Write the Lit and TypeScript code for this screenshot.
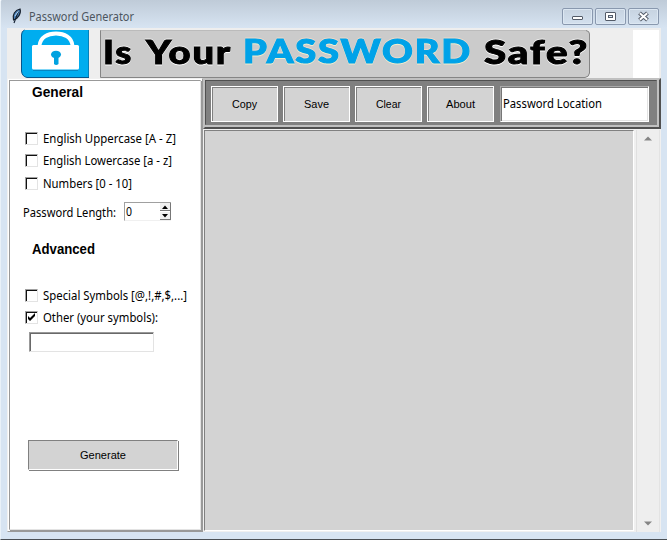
import { LitElement, html, css } from "lit";
import { customElement, property, state } from "lit/decorators.js";

@customElement("fit-label")
class FitLabel extends LitElement {
  @property() text = "";
  @property({ type: Number }) w = 60;
  static styles = css`
    :host { display: block; height: 16px; }
    svg { display: block; overflow: visible; }
    text { font-family: "Noto Sans", "Open Sans", sans-serif; font-size: 12px; fill: var(--ink, #000); }
    :host([arial]) text { font-family: "Liberation Sans", Arial, sans-serif; font-size: 11.4px; }
    :host([heading]) text { font-family: "Liberation Sans", Arial, sans-serif; font-size: 14px; font-weight: 700; }
  `;
  render() {
    return html`<svg width=${this.w} height="16"><text x="0" y="12" textLength=${this.w} lengthAdjust="spacingAndGlyphs">${this.text}</text></svg>`;
  }
}

@customElement("tk-check")
class TkCheck extends LitElement {
  @property() label = "";
  @property({ type: Number }) w = 100;
  @property({ type: Boolean }) checked = false;
  static styles = css`
    :host { display: flex; height: 16px; gap: 5px; align-items: flex-start; }
    .box { box-sizing: border-box; width: 13px; height: 13px; margin-top: 1px; background: #fff;
      border: 1px solid; border-color: #a0a0a0 #e3e3e3 #e3e3e3 #a0a0a0; box-shadow: inset 1px 1px #111; }
    svg { display: block; }
  `;
  render() {
    return html`<div class="box">${this.checked
      ? html`<svg width="11" height="11" viewBox="0 0 11 11"><path d="M2 4v3l2 2 5-5V1L4 6z" fill="#000"/></svg>` : ""}</div>
      <fit-label .text=${this.label} .w=${this.w}></fit-label>`;
  }
}

@customElement("app-root")
class AppRoot extends LitElement {
  @state() private tools = [["Copy", 25], ["Save", 25], ["Clear", 25], ["About", 29]] as [string, number][];
  static styles = css`
    :host { display: block; }
    * { box-sizing: border-box; }
    .window { width: 667px; height: 540px; overflow: hidden; background: #d7e4f2; display: flex; flex-direction: column;
      border-bottom: 1px solid #4a4f55; border-left: 1px solid #e9f1f8; border-top-left-radius: 2px; }
    .title { height: 28px; flex: none; background: linear-gradient(#bfcbd8, #d7e4f2); display: flex; padding: 8px 8px 0 9px; align-items: flex-start; }
    .title .feather { margin: 0 5px 0 0; display: block; }
    .title fit-label { --ink: #4d565f; margin-top: 1px; }
    .controls { margin-left: auto; display: flex; gap: 2px; }
    .ctl { width: 31px; height: 17px; border: 1px solid #8998ae; border-radius: 2px; box-shadow: inset 0 0 0 1px #dce7f2; display: flex; }
    .ctl svg { width: 29px; height: 15px; }
    .body { margin: 0 6px 0 6px; width: 654px; height: 504px; background: #f0f0f0; display: grid; grid-template: 50px 454px / 196px 458px; }
    .banner { grid-column: 1 / 3; display: flex; background: #eee; }
    .banner svg { width: 626px; height: 50px; display: block; }
    .banner .blank { width: 26px; background: #fff; margin-top: 2px; }
    .side { background: #fff; padding: 1px; border: 1px solid; border-color: #f0f0f0 #999 #999 #f0f0f0; }
    .panel { height: 450px; border: 1px solid; border-color: #999 #e3e3e3 #e3e3e3 #999; box-shadow: 1px 1px #999; background: #fff; width: 192px; display: flex; flex-direction: column; align-items: flex-start; }
    .general { margin: 4px 0 0 22px; }
    .checks { margin: 30px 0 0 15px; display: grid; grid-template-rows: 22px 23px 16px; }
    .length { display: flex; margin: 10px 0 0 13px; gap: 8px; height: 19px; }
    .length > fit-label { margin-top: 3px; }
    .spin { width: 47px; height: 19px; display: flex; border: 1px solid; border-color: #a0a0a0 transparent #f0f0f0 #a0a0a0; border-right: 0; padding-left: 1px; justify-content: space-between; }
    .spin fit-label { margin-top: 1px; }
    .spin svg { display: block; }
    .advanced { margin: 21px 0 0 22px; }
    .checks.two { margin-top: 30px; grid-template-rows: 22px 16px; }
    .entry { margin: 6px 0 0 19px; width: 125px; height: 20px; border: 1px solid; border-color: #999 #e3e3e3 #e3e3e3 #999; box-shadow: inset 1px 1px #696969; }
    .generate { margin: 88px 0 0 18px; width: 150px; height: 30px; background: #d3d3d3; border: 1px solid; border-color: #808080 #fff #fff #808080; box-shadow: 1px 1px #808080; padding: 6px 0 0 51px; }
    .main { display: flex; flex-direction: column; }
    .toolbar { height: 51px; background: #c0c0c0; border: 2px solid; border-color: #c0c0c0 #505050 #505050 #c0c0c0; }
    .tools { height: 45px; width: 452px; background: #808080; border: 1px solid; border-color: #505050 #808080 #808080 #505050; padding: 5px 0 0 5px; display: flex; gap: 5px; }
    .tool { flex: none; width: 67px; height: 36px; background: #d3d3d3; border: 1px solid #fff; box-shadow: inset 1px 1px #808080; display: flex; justify-content: center; padding-top: 9px; }
    .location { flex: none; margin-left: 1px; width: 149px; height: 36px; background: #fff; border: 1px solid; border-color: #aaa #fff #fff #aaa; box-shadow: inset 1px 1px #777, inset -1px -1px #e3e3e3; padding: 9px 0 0 2px; }
    .output { flex: 1; display: flex; padding: 1px 0 0 1px; }
    .text { width: 430px; height: 401px; background: #d3d3d3; border: 1px solid; border-color: #808080 #fff #fff #808080; }
    .gutter { width: 2px; }
    .scroll { width: 24px; background: #eee; border-left: 1px solid #e0e0e0; border-right: 1px solid #e3e3e3; display: flex; flex-direction: column; justify-content: space-between; align-items: center; padding: 6px 0 6px; }
    .scroll svg { display: block; }
    .q { font-family: "Lato", "Open Sans", sans-serif; font-weight: 900; font-size: 32px; letter-spacing: 1.5px; fill: #000; stroke: #000; stroke-width: 1px; filter: drop-shadow(0 1px .4px #fff) drop-shadow(0 -1px .4px #eee); }
    .p { fill: #00a2e8; stroke: #00a2e8; stroke-width: 1.1px; filter: drop-shadow(0 1px .4px #f4eecb) drop-shadow(0 -1px .4px #eed9c8); }
  `;
  render() {
    return html`<div class="window">
      <div class="title">
        <svg class="feather" width="14" height="16" viewBox="0 0 14 16"><path d="M3.500 12C2 7 5 2 10 1C11.500 5 8 11 3.500 12Z" fill="#4e86c0" stroke="#17202c" stroke-width="1.200"/><path d="M8.500 3L4 15" stroke="#172334" stroke-width="1.200"/><path d="M5 8L8.500 3" stroke="#b2d3ec"/></svg>
        <fit-label .text=${"Password Generator"} .w=${105}></fit-label>
        <div class="controls">
          <div class="ctl"><svg viewBox="0 0 29 15"><rect x="9.5" y="7.5" width="10" height="3" rx=".5" fill="#fff" stroke="#535b68"/></svg></div>
          <div class="ctl"><svg viewBox="0 0 29 15"><rect x="9.5" y="3.5" width="10" height="8" rx=".5" fill="#fff" stroke="#535b68"/><rect x="12.5" y="6.5" width="4" height="2" fill="#d7e4f2" stroke="#535b68"/></svg></div>
          <div class="ctl"><svg viewBox="0 0 29 15"><path d="M10.5 4L18.5 11M18.5 4L10.5 11" stroke="#535b68" stroke-width="4"/><path d="M10.8 4.3L18.2 10.7M18.2 4.3L10.8 10.7" stroke="#fff" stroke-width="2"/></svg></div>
        </div>
      </div>
      <div class="body">
        <div class="banner">
          <svg viewBox="7 28 626 50">
            <path d="M24.5 30H89V77.5H27Q21.5 76 21.5 71V34Q22 31 24.5 30Z" fill="#00adef"/>
            <path d="M24.5 30Q21.5 31 21.5 35V71Q22 76.500 27 77.500H89" fill="none" stroke="#06558b"/>
            <path d="M88.500 30V77" stroke="#0681ba"/>
            <path d="M39.500 46C40 37 48 33.500 56 33.500S72 37 72.500 46" fill="none" stroke="#fff" stroke-width="4"/>
            <rect x="32" y="45" width="47" height="24.500" rx="1.500" fill="#fff"/>
            <path d="M33 70.500H78" stroke="#0686c2"/>
            <ellipse cx="56" cy="54.500" rx="5" ry="3.800" fill="#00a2e0"/><path d="M54 56H58.500V64Q56 66 54 64Z" fill="#00a2e0"/>
            <path d="M100.500 30.500H586Q589.500 31 589.500 34V73Q589 77 585 77.500H100.500Z" fill="#cbcbcb" stroke="#858585"/>
            <path d="M101 30.500H586" stroke="#bbb"/>
            <text class="q" x="103" y="63.500" textLength="30" lengthAdjust="spacingAndGlyphs">Is</text>
            <text class="q" x="146" y="63.500" textLength="86" lengthAdjust="spacingAndGlyphs">Your</text>
            <text class="q p" x="243" y="63" textLength="229" lengthAdjust="spacingAndGlyphs">PASSWORD</text>
            <text class="q" x="484" y="63.500" textLength="105" lengthAdjust="spacingAndGlyphs">Safe?</text>
          </svg>
          <div class="blank"></div>
        </div>
        <div class="side"><div class="panel">
          <fit-label heading class="general" .text=${"General"} .w=${51}></fit-label>
          <div class="checks">
            <tk-check .label=${"English Uppercase [A - Z]"} .w=${133}></tk-check>
            <tk-check .label=${"English Lowercase [a - z]"} .w=${129}></tk-check>
            <tk-check .label=${"Numbers [0 - 10]"} .w=${89}></tk-check>
          </div>
          <div class="length"><fit-label .text=${"Password Length:"} .w=${93}></fit-label>
            <div class="spin"><fit-label .text=${"0"} .w=${6}></fit-label>
              <svg width="11" height="17" viewBox="0 0 11 17"><rect width="11" height="17" fill="#f0f0f0"/><path d="M0 7.500H11M0 16.500H11M10.500 0V17" stroke="#777"/><path d="M0 8.500H10" stroke="#fff"/><path d="M2 6H8L5 2.500ZM2 11H8L5 14.500Z"/></svg></div></div>
          <fit-label heading class="advanced" .text=${"Advanced"} .w=${63}></fit-label>
          <div class="checks two">
            <tk-check .label=${"Special Symbols [@,!,#,$,...]"} .w=${144}></tk-check>
            <tk-check checked .label=${"Other (your symbols):"} .w=${115}></tk-check>
          </div>
          <div class="entry"></div>
          <div class="generate"><fit-label arial .text=${"Generate"} .w=${46}></fit-label></div>
        </div></div>
        <div class="main">
          <div class="toolbar"><div class="tools">
            ${this.tools.map(([t, w]) => html`<div class="tool"><fit-label arial .text=${t} .w=${w}></fit-label></div>`)}
            <div class="location"><fit-label .text=${"Password Location"} .w=${99}></fit-label></div>
          </div></div>
          <div class="output"><div class="text"></div><div class="gutter"></div>
            <div class="scroll">
              <svg width="8" height="5"><path d="M0 4.500H8L4 .5Z" fill="#858585"/></svg>
              <svg width="8" height="5"><path d="M0 .5H8L4 4.500Z" fill="#858585"/></svg>
            </div></div>
        </div>
      </div>
    </div>`;
  }
}
